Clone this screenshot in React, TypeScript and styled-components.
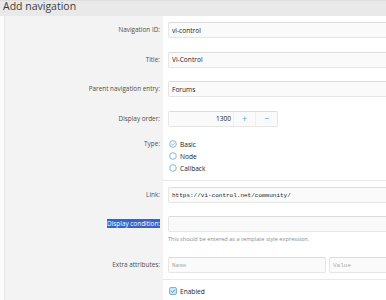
import { createGlobalStyle, styled } from "styled-components";

const GlobalStyle = createGlobalStyle`
  body {
    margin: 0;
    background: #fbfbfb;
    overflow: hidden;
    font-family: "Open Sans", "Noto Sans", sans-serif;
    color: #1f1f1f;
  }
`;

const Header = styled.div`
  height: 16px;
  background: #e9e9e9;
  border-top: 1px solid #dedede;
  box-sizing: border-box;
  padding-left: 3px;
`;

const Title = styled.h1`
  margin: 0;
  font-size: 10.5px;
  font-weight: 400;
  line-height: 11px;
  color: #3c3c3c;
`;

const Block = styled.div`
  width: 520px;
  margin-left: 4px;
  border-left: 1px solid #e6e6e6;
`;

interface RowPropsType {
  $sep?: boolean;
  $top?: number;
  $bottom?: number;
}

const Row = styled.div`
  display: flex;
`;

const LabelCell = styled.div<RowPropsType>`
  width: 155px;
  flex: none;
  background: #f3f3f3;
  text-align: right;
  padding: ${(p) => p.$top ?? 6}px 3px ${(p) => p.$bottom ?? 7.5}px 0;
  font-size: 6.4px;
  line-height: ${(p) => (p.$top === 4 ? 12 : 16)}px;
  color: #4e4e4e;
`;

const InputCell = styled.div<RowPropsType>`
  flex: 1;
  background: #fff;
  padding: ${(p) => p.$top ?? 6}px 0 ${(p) => p.$bottom ?? 7.5}px 5px;
  border-top: ${(p) => (p.$sep ? "1px solid #e8e8e8" : "none")};
`;

interface TextInputPropsType {
  $mono?: boolean;
  $width?: number;
}

const TextInput = styled.input<TextInputPropsType>`
  display: block;
  box-sizing: border-box;
  width: ${(p) => (p.$width ? `${p.$width}px` : "100%")};
  height: 16px;
  margin: 0;
  padding: 0 3px;
  border: 1px solid #e6e6e6;
  border-top-color: #dcdcdc;
  border-radius: 2px;
  background: #fafafa;
  color: #222;
  font-family: ${(p) =>
    p.$mono ? `"Liberation Mono", "DejaVu Sans Mono", monospace` : `"Open Sans", sans-serif`};
  font-size: ${(p) => (p.$mono ? 6 : 6.6)}px;
  outline: none;

  &::placeholder {
    color: #a8a8a8;
  }
`;

const NumberBox = styled.div`
  display: flex;
  width: 110px;
  height: 16px;
  box-sizing: border-box;
  border: 1px solid #e6e6e6;
  border-top-color: #dcdcdc;
  border-radius: 2px;
  background: #fafafa;
`;

const NumberValue = styled.div`
  flex: 1;
  text-align: right;
  padding-right: 2px;
  font-size: 6.6px;
  line-height: 14px;
  color: #222;
`;

const SpinButton = styled.div`
  width: 21px;
  text-align: center;
  font-size: 9px;
  line-height: 14px;
  color: #47a7eb;
  border-left: 1px solid #efefef;
`;

const ChoiceList = styled.div`
  display: flex;
  flex-direction: column;
`;

const Choice = styled.div`
  display: flex;
  align-items: center;
  gap: 3px;
  height: 12px;
  font-size: 6.6px;
  color: #222;
  padding-left: 1px;
`;

const Explain = styled.div`
  margin-top: 2px;
  font-size: 5.6px;
  line-height: 10px;
  color: #8a8a8a;
`;

const PairRow = styled.div`
  display: flex;
  gap: 3px;
`;

const Selected = styled.span`
  background: #3165cb;
  color: #fff;
`;

const RadioIcon = ({ checked }: { checked?: boolean }) => (
  <svg width="8" height="8" viewBox="0 0 8 8">
    <circle cx="4" cy="4" r="3.3" fill="none" stroke="#74aee0" strokeWidth="0.9" />
    {checked && (
      <path d="M2.4 4.1 L3.6 5.2 L5.7 2.9" fill="none" stroke="#74aee0" strokeWidth="0.9" />
    )}
  </svg>
);

const CheckIcon = () => (
  <svg width="8" height="8" viewBox="0 0 8 8">
    <rect x="0.6" y="0.6" width="6.8" height="6.8" rx="1" fill="#d6e9f8" stroke="#5ea3dc" strokeWidth="0.9" />
    <path d="M2.2 4.1 L3.5 5.3 L5.8 2.7" fill="none" stroke="#3d8fd4" strokeWidth="1" />
  </svg>
);

export default function App() {
  return (
    <>
      <GlobalStyle />
      <Header>
        <Title>Add navigation</Title>
      </Header>
      <Block>
        <Row>
          <LabelCell>Navigation ID:</LabelCell>
          <InputCell>
            <TextInput defaultValue="vi-control" />
          </InputCell>
        </Row>
        <Row>
          <LabelCell>Title:</LabelCell>
          <InputCell>
            <TextInput defaultValue="Vi-Control" />
          </InputCell>
        </Row>
        <Row>
          <LabelCell>Parent navigation entry:</LabelCell>
          <InputCell>
            <TextInput defaultValue="Forums" />
          </InputCell>
        </Row>
        <Row>
          <LabelCell>Display order:</LabelCell>
          <InputCell>
            <NumberBox>
              <NumberValue>1300</NumberValue>
              <SpinButton>+</SpinButton>
              <SpinButton>−</SpinButton>
            </NumberBox>
          </InputCell>
        </Row>
        <Row>
          <LabelCell $top={4} $bottom={6}>
            Type:
          </LabelCell>
          <InputCell $top={4} $bottom={6}>
            <ChoiceList>
              <Choice>
                <RadioIcon checked />
                Basic
              </Choice>
              <Choice>
                <RadioIcon />
                Node
              </Choice>
              <Choice>
                <RadioIcon />
                Callback
              </Choice>
            </ChoiceList>
          </InputCell>
        </Row>
        <Row>
          <LabelCell $top={7} $bottom={7}>
            Link:
          </LabelCell>
          <InputCell $sep $top={6} $bottom={7}>
            <TextInput $mono defaultValue="https://vi-control.net/community/" />
          </InputCell>
        </Row>
        <Row>
          <LabelCell $bottom={19}>
            <Selected>Display condition:</Selected>
          </LabelCell>
          <InputCell $bottom={7}>
            <TextInput $mono />
            <Explain>This should be entered as a template style expression.</Explain>
          </InputCell>
        </Row>
        <Row>
          <LabelCell $bottom={6}>Extra attributes:</LabelCell>
          <InputCell $bottom={6}>
            <PairRow>
              <TextInput $mono $width={158} placeholder="Name" />
              <TextInput $mono $width={158} placeholder="Value" />
            </PairRow>
          </InputCell>
        </Row>
        <Row>
          <LabelCell $top={6} $bottom={20} />
          <InputCell $sep $top={5} $bottom={20}>
            <Choice>
              <CheckIcon />
              Enabled
            </Choice>
          </InputCell>
        </Row>
      </Block>
    </>
  );
}
